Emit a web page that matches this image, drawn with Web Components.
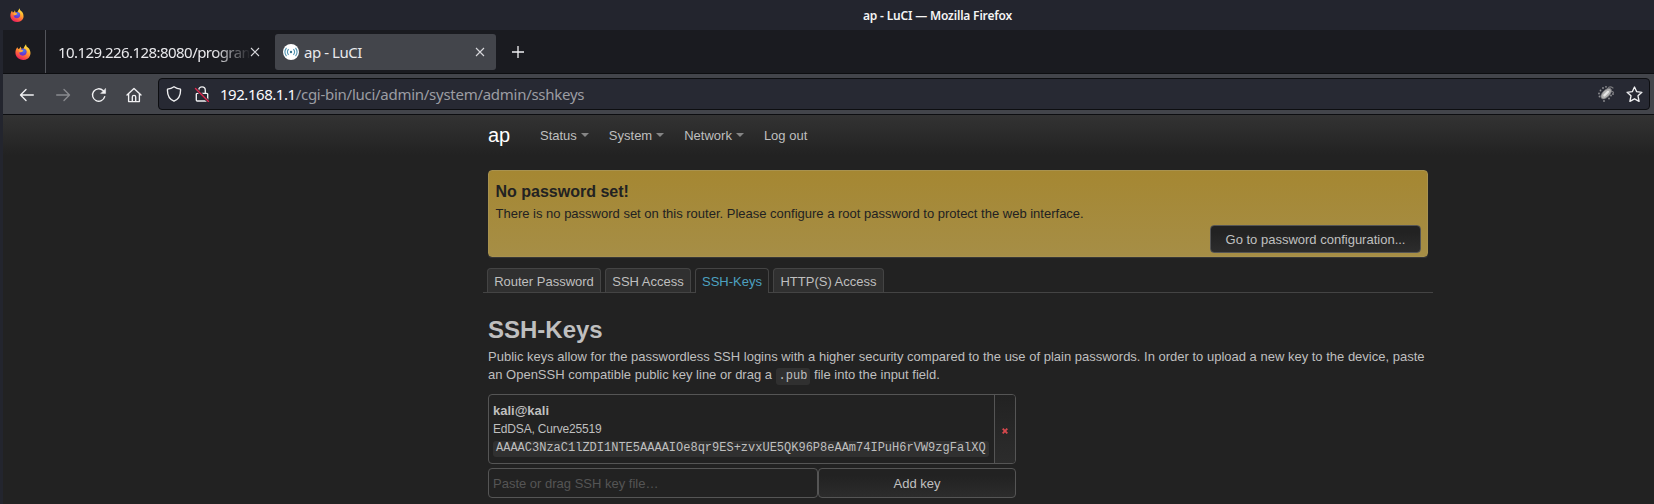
<!DOCTYPE html>
<html lang="en"><head><meta charset="utf-8"><title>ap - LuCI</title>
<style>html,body{margin:0;height:100%;overflow:hidden;background:#222}</style></head><body>
<browser-window>
 <title-bar slot="title">ap - LuCI — Mozilla Firefox</title-bar>
 <tab-strip slot="tabs"></tab-strip>
 <nav-toolbar slot="toolbar"></nav-toolbar>
 <luci-page></luci-page>
</browser-window>
<script>
function define(name, html){
  const t=document.createElement('template'); t.innerHTML=html;
  customElements.define(name,class extends HTMLElement{
    constructor(){super();this.attachShadow({mode:'open'}).append(t.content.cloneNode(true));}
  });
}
define('browser-window',`<style>
:host{display:grid;grid-template-rows:30px 44px 41px 389px;width:1654px;height:504px;background:#23252e;overflow:hidden}
.in{padding-left:3px;min-width:0;display:grid}
</style><slot name="title"></slot><div class="in"><slot name="tabs"></slot></div><div class="in"><slot name="toolbar"></slot></div><div class="in"><slot></slot></div>`);
define('firefox-logo',`<style>:host{display:block;width:16px;height:16px}svg{display:block;width:100%;height:100%}</style>
<svg viewBox="0 0 16 16"><defs><linearGradient id="f" x1=".8" y1="0" x2=".3" y2="1"><stop offset="0" stop-color="#fff44f"/><stop offset=".35" stop-color="#ffb52e"/><stop offset=".65" stop-color="#ff6a3a"/><stop offset="1" stop-color="#e9195e"/></linearGradient><radialGradient id="g" cx=".6" cy=".3"><stop offset="0" stop-color="#3f83f0"/><stop offset="1" stop-color="#6a36cf"/></radialGradient></defs>
<path fill="url(#f)" d="M2.3 3.2 3.2 5l1.4-.4 1-2 .6 2L8.3 5 9.2 3 11 .2l.4 2.1 2.6 2.3c2.5 4 1.7 8.1-1.5 10.2C8 17.5 2.2 15.4.8 11 0 8.3.5 5.4 2.3 3.2Z"/><path fill="url(#g)" d="M5.4 5.6c1.7-1.8 5.8-1.2 6.2 1.7.4 2.7-1.6 4.5-3.9 4.4C5.2 11.6 4 9.8 4.3 8l2.8-.3 1-1Z"/><path fill="#ffac36" d="M4 5.7c1.4-.5 3.1-.3 4.3.7L6.8 8l-2.3.5Z"/></svg>`);
define('title-bar',`<style>
:host{display:grid;grid-template-columns:30px 1fr;align-items:center;height:30px;background:#23252e;color:#f4f4f4;font:600 12px/30px "Noto Sans",sans-serif}
firefox-logo{width:14px;height:14px;margin-left:10px}
.t{margin-left:833px;white-space:nowrap;letter-spacing:-.18px;line-height:29px}
</style><firefox-logo></firefox-logo><div class="t"><slot></slot></div>`);
define('browser-tab',`<style>
:host{display:flex;align-items:center;box-sizing:border-box;height:36px;padding:0 11px 0 8px;color:#e9e9ec;font:15px/20px "Noto Sans",sans-serif;border-radius:3px}
:host([active]){background:#43454b}
.t{flex:1;white-space:nowrap;overflow:hidden;margin:0 0 1px 5px;letter-spacing:var(--ls,0)}
:host([clip]){padding:0 11px 0 12px}
:host([clip]) .t{margin-left:0;-webkit-mask:linear-gradient(90deg,#000 82%,transparent 101%);mask:linear-gradient(90deg,#000 82%,transparent 101%)}
svg{flex:none;margin-left:1px}
</style><slot name="icon"></slot><div class="t"><slot></slot></div><svg width="10" height="10" viewBox="0 0 10 10" stroke="#d8d8dc" stroke-width="1.1"><path d="m1 1 8 8M9 1 1 9"/></svg>`);
define('tab-strip',`<style>
:host{display:flex;box-sizing:border-box;height:44px;background:#1a1b20;border-bottom:1px solid #0d0e11;align-items:flex-start}
.pin{width:42px;height:43px;display:grid;place-items:center;border-right:1px solid #53555b;box-sizing:content-box}
.pin firefox-logo{width:16px;height:16px;margin:1px 0 0 -2px}
browser-tab{margin-top:4px}
.one{width:225px;margin-right:4px;--ls:-.56px}.two{width:221px;--ls:-.45px}
.plus{margin:16px 0 0 15.500px;display:block}
</style><div class="pin"><firefox-logo></firefox-logo></div>
<browser-tab clip class="one">10.129.226.128:8080/program</browser-tab>
<browser-tab active class="two"><svg slot="icon" width="16" height="16" viewBox="0 0 16 16" fill="none" stroke="#5294b1" stroke-width="1.1"><circle cx="8" cy="8" r="8" fill="#fff" stroke="none"/><circle cx="8" cy="8" r="1.2" fill="#36738f" stroke="none"/><path d="M5.6 5.2a4.3 4.3 0 0 0 0 5.6M10.4 5.2a4.3 4.3 0 0 1 0 5.6M3.5 3.8a7 7 0 0 0 0 8.4M12.5 3.8a7 7 0 0 1 0 8.4"/></svg>ap - LuCI</browser-tab>
<svg class="plus" width="12" height="12" viewBox="0 0 12 12" stroke="#f0f0f2" stroke-width="1.3"><path d="M6 0v12M0 6h12"/></svg>`);
define('nav-toolbar',`<style>
:host{display:flex;box-sizing:border-box;height:41px;background:#43454b;border-bottom:1px solid #0d0e11;padding:4px 4px 4px 16px;align-items:flex-start}
svg{display:block;fill:none;stroke:#f1f1f3;stroke-width:1.35;stroke-linecap:round;stroke-linejoin:round;flex:none}
.b{margin:9px 20px 0 0}.dim{opacity:.4}
.url{display:flex;align-items:center;flex:1;box-sizing:border-box;height:32px;border:1px solid #0d0e11;border-radius:4px;background:#272933;font:15px/20px "Noto Sans",sans-serif;color:#9c9da3;padding:0 6px 0 7px}
.url b{font-weight:400;color:#fbfbfe;letter-spacing:-.46px}.addr{flex:1;white-space:nowrap;margin-left:10px;letter-spacing:-.27px}
.lock{margin-left:12px}
</style>
<svg class="b" width="16" height="16" viewBox="0 0 16 16"><path d="M14.3 8H1.7M7 2.5 1.5 8 7 13.5"/></svg>
<svg class="b dim" width="16" height="16" viewBox="0 0 16 16"><path d="M1.7 8h12.6M9 2.5 14.5 8 9 13.5"/></svg>
<svg class="b" width="16" height="16" viewBox="0 0 16 16"><path d="M13.7 9.6A6.2 6.2 0 1 1 12 3.5l1.4 1.4"/><path d="M14.6 1.7v4.7H9.9Z" fill="#f1f1f3" stroke-width=".5"/></svg>
<svg class="b" width="16" height="16" viewBox="0 0 16 16" style="margin:9px 16px 0 -1px"><path d="M1 8 8 1.4 15 8M2.6 7v7.6h10.8V7M6.3 14.5V10a1.7 1.7 0 0 1 3.4 0v4.5"/></svg>
<div class="url"><svg width="16" height="16" viewBox="0 0 16 16"><path d="M8 .8c2.1 1.5 4.3 2.2 6.5 2.4.3 4.8-.4 9.4-6.5 12C1.9 12.6 1.2 8 1.5 3.2 3.7 3 5.9 2.300 8 .8Z"/></svg>
<svg class="lock" width="16" height="16" viewBox="0 0 16 16"><path d="M3.2 15h9.600a.9.9 0 0 0 .9-.9V8.300a.9.9 0 0 0-.9-.9H3.200a.9.900 0 0 0-.9.9v5.800c0 .5.4.9.9.9ZM4.700 7.200V4.400C4.700-.3 11.300-.3 11.300 4.400v2.800"/><path stroke="#272933" stroke-width="3" d="m1.500 2.500 13 13"/><path stroke="#e0264d" d="m1.500 2.500 13 13"/></svg>
<div class="addr"><b>192.168.1.1</b>/cgi-bin/luci/admin/system/admin/sshkeys</div>
<svg width="18" height="18" viewBox="0 0 18 18" style="margin-right:11px"><g fill="#8e8e92" stroke="none"><circle cx="2" cy="8.500" r=".9"/><circle cx="3.500" cy="5.500" r=".9"/><circle cx="6" cy="3" r=".9"/><circle cx="2.500" cy="11.500" r=".9"/><circle cx="7" cy="16" r=".9"/><circle cx="12" cy="13.500" r=".9"/><circle cx="14" cy="10.500" r=".9"/><circle cx="16" cy="9" r=".9"/><circle cx="9" cy="1.800" r=".9"/></g><path d="M11 3.500c1-2 3-2 5-.500M13.500 6.500c2-.2 2.500 0 3 1" stroke="#77777b" stroke-width="1.200"/><ellipse cx="9.200" cy="8.600" rx="6.600" ry="3.500" transform="rotate(-45 9.200 8.600)" fill="#b0b0b0" stroke="#77777b" stroke-width=".7"/><path stroke="#e6e6e6" stroke-width="2.200" d="m7.400 10.400 3.600-3.600"/></svg>
<svg width="17" height="17" viewBox="0 0 17 17"><path d="m8.500 1 2.200 4.700 5.200.6-3.900 3.500 1.100 5.600-4.600-2.600-4.600 2.600L5 9.800 1.100 6.300l5.200-.6Z"/></svg></div>`);
define('nav-item',`<style>:host{display:flex;align-items:center;color:#bfbfbf}
i{border:4px solid transparent;border-top-color:#858585;border-bottom:0;margin:0 1px 1px 4px}:host([plain]) i{display:none}</style><slot></slot><i></i>`);
define('luci-button',`<style>:host{display:grid;place-items:center;box-sizing:border-box;border:1px solid #555;border-radius:4px;background:linear-gradient(#222,#222 25%,#2c2c2c);color:#c0c0c0;font-size:13px;line-height:18px;padding-top:2px}</style><slot></slot>`);
define('alert-box',`<style>:host{display:block;box-sizing:border-box;height:87px;border:1px solid #a8924f;border-radius:4px;background:linear-gradient(#a58732,#a68e46);color:#222;padding:12px 6px 0 6.500px;box-shadow:0 1px 1px #3a3a3a}
h4{font-size:16px;line-height:18px;margin:0;letter-spacing:0}p{margin:3px 0 0;line-height:20px}
luci-button{width:211px;height:28px;margin:1px 0 0 auto;border-color:#555}</style>
<h4>No password set!</h4><p><slot></slot></p><luci-button>Go to password configuration...</luci-button>`);
define('menu-tab',`<style>:host{display:block;box-sizing:border-box;height:24px;border:1px solid #444;border-bottom:0;border-radius:4px 4px 0 0;background:#303030;text-align:center;line-height:25px;white-space:nowrap}
:host([active]){background:#222;color:#4da1c0;height:25px}</style><slot></slot>`);
define('key-item',`<style>:host{display:grid;grid-template-columns:505px 1fr;box-sizing:border-box;width:528px;height:70px;border:1px solid #555;border-radius:4px;line-height:18px}
.k{padding:7px 0 0 4px}.s{font-size:12px;line-height:18px;height:21px;letter-spacing:-.17px}
code{display:block;width:496px;box-sizing:border-box;height:16px;background:#303030;border-radius:3px;font:12px/15px "Liberation Mono",monospace;padding-left:3px;white-space:nowrap}
.d{border-left:1px solid #555;background:linear-gradient(#222,#2c2c2c);display:grid;place-items:center;padding-top:3px;border-radius:0 3px 3px 0}</style>
<div class="k"><b><slot name="name"></slot></b><div class="s"><slot name="type"></slot></div><code><slot></slot></code></div>
<div class="d"><svg width="6" height="6" viewBox="0 0 6 6" stroke="#d5484d" stroke-width="1.900"><path d="m.7.700 4.600 4.600M5.300.700.700 5.300"/></svg></div>`);
define('luci-page',`<style>
:host{display:block;box-sizing:border-box;height:389px;padding-left:485px;background:linear-gradient(#333,#222 40px,#222);color:#bfbfbf;font:13px/18px "Liberation Sans",Arial,sans-serif;overflow:hidden}
header{display:flex;height:40px;align-items:center;width:940px}
.brand{font-size:20px;color:#fff;width:52px;padding-bottom:1px}
nav{display:flex;padding-top:1px}nav nav-item{margin-right:19px}
alert-box{width:940px;margin-top:15px}
.tabs{display:flex;align-items:flex-start;height:24px;margin:11px 0 0 -5px;width:946px;padding-left:4px;border-bottom:1px solid #444;gap:4px}
h2{font-size:24px;line-height:36px;margin:19px 0 0;}
p{margin:0;white-space:nowrap}
p code{font:12px/16px "Liberation Mono",monospace;background:#303030;border-radius:3px;padding:1px 3px 2px}
key-item{margin-top:10px}
.add{display:flex;width:528px;margin-top:4px;height:30px}
.in{box-sizing:border-box;width:330px;border:1px solid #555;border-radius:4px;padding-left:4px;line-height:29px;color:#555}
.add luci-button{flex:1}
</style>
<header><div class="brand">ap</div><nav><nav-item>Status</nav-item><nav-item>System</nav-item><nav-item>Network</nav-item><nav-item plain>Log out</nav-item></nav></header>
<alert-box>There is no password set on this router. Please configure a root password to protect the web interface.</alert-box>
<div class="tabs"><menu-tab style="width:114px">Router Password</menu-tab><menu-tab style="width:86px">SSH Access</menu-tab><menu-tab active style="width:74px">SSH-Keys</menu-tab><menu-tab style="width:111px">HTTP(S) Access</menu-tab></div>
<h2>SSH-Keys</h2>
<p>Public keys allow for the passwordless SSH logins with a higher security compared to the use of plain passwords. In order to upload a new key to the device, paste<br>an OpenSSH compatible public key line or drag a <code>.pub</code> file into the input field.</p>
<key-item><span slot="name">kali@kali</span><span slot="type">EdDSA, Curve25519</span>AAAAC3NzaC1lZDI1NTE5AAAAIOe8qr9ES+zvxUE5QK96P8eAAm74IPuH6rVW9zgFalXQ</key-item>
<div class="add"><div class="in">Paste or drag SSH key file…</div><luci-button>Add key</luci-button></div>`);
</script></body></html>
